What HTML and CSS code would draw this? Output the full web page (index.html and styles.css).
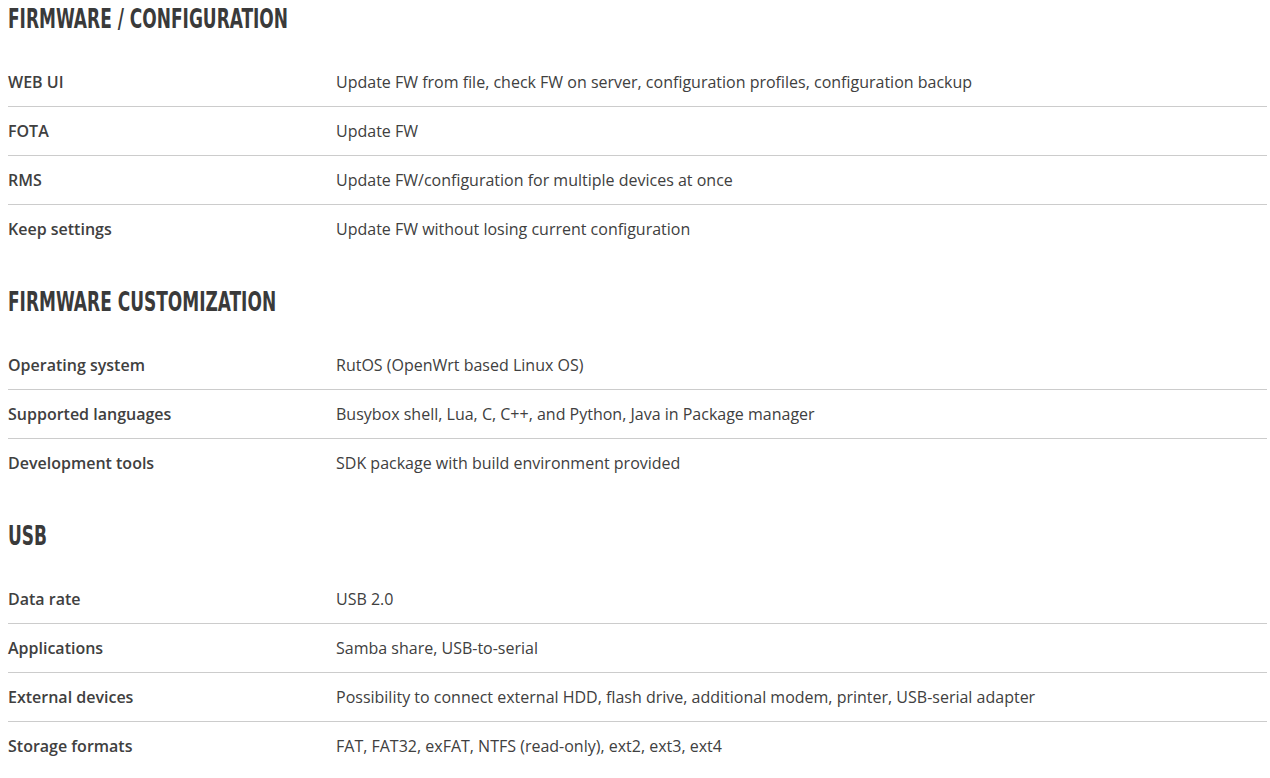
FILE: index.html
```html
<!DOCTYPE html>
<html>
<head>
<meta charset="utf-8">
<link rel="stylesheet" href="styles.css">
</head>
<body>
<div class="page">
  <section class="spec">
    <h2 class="spec-title"><span class="spec-title-text">FIRMWARE / CONFIGURATION</span></h2>
    <div class="rows">
      <div class="row"><div class="label">WEB UI</div><div class="value">Update FW from file, check FW on server, configuration profiles, configuration backup</div></div>
      <div class="row"><div class="label">FOTA</div><div class="value">Update FW</div></div>
      <div class="row"><div class="label">RMS</div><div class="value">Update FW/configuration for multiple devices at once</div></div>
      <div class="row"><div class="label">Keep settings</div><div class="value">Update FW without losing current configuration</div></div>
    </div>
  </section>
  <section class="spec">
    <h2 class="spec-title"><span class="spec-title-text">FIRMWARE CUSTOMIZATION</span></h2>
    <div class="rows">
      <div class="row"><div class="label">Operating system</div><div class="value">RutOS (OpenWrt based Linux OS)</div></div>
      <div class="row"><div class="label">Supported languages</div><div class="value">Busybox shell, Lua, C, C++, and Python, Java in Package manager</div></div>
      <div class="row"><div class="label">Development tools</div><div class="value">SDK package with build environment provided</div></div>
    </div>
  </section>
  <section class="spec">
    <h2 class="spec-title"><span class="spec-title-text">USB</span></h2>
    <div class="rows">
      <div class="row"><div class="label">Data rate</div><div class="value">USB 2.0</div></div>
      <div class="row"><div class="label">Applications</div><div class="value">Samba share, USB-to-serial</div></div>
      <div class="row"><div class="label">External devices</div><div class="value">Possibility to connect external HDD, flash drive, additional modem, printer, USB-serial adapter</div></div>
      <div class="row"><div class="label">Storage formats</div><div class="value">FAT, FAT32, exFAT, NTFS (read-only), ext2, ext3, ext4</div></div>
    </div>
  </section>
</div>
</body>
</html>
```
FILE: styles.css
```css
html, body {
  margin: 0;
  padding: 0;
  background: #fff;
}
.page {
  padding: 0 3px 0 8px;
  font-family: "Open Sans", "Liberation Sans", sans-serif;
  font-size: 16px;
  color: #404040;
}
.spec {
  margin-bottom: 30px;
}
.spec-title {
  margin: 0 0 20px 0;
  height: 38px;
  line-height: 38px;
  font-family: "Liberation Sans Narrow", "DejaVu Sans Condensed", sans-serif;
  font-weight: bold;
  font-size: 27px;
  color: #3a3a3a;
}
.spec-title-text {
  display: inline-block;
  transform: scaleX(0.7);
  transform-origin: left center;
  white-space: nowrap;
}
.rows {
  display: flex;
  flex-direction: column;
}
.row {
  display: grid;
  grid-template-columns: 328px 1fr;
  align-items: center;
  height: 48px;
  border-bottom: 1px solid #ccc;
}
.row:last-child {
  border-bottom: none;
}
.label {
  font-weight: 600;
}
.value {
  font-weight: 400;
}
```
